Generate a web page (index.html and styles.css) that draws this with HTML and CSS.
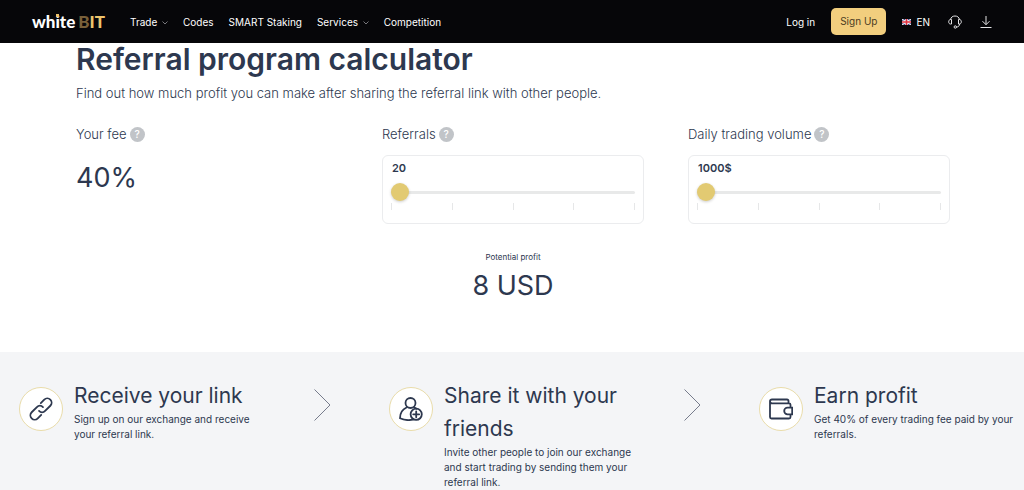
FILE: index.html
```
<!DOCTYPE html>
<html lang="en">
<head>
	<meta charset="UTF-8">
	<meta name="viewport" content="width=device-width, initial-scale=1.0">
	<title>WhiteBIT Referral Program</title>
	<link rel="stylesheet" href="styles.css">
</head>
<body>
	<header class="header">
		<a class="logo" href="#" aria-label="whiteBIT"><span>wh<span class="logo-i">i</span>te</span><span class="logo-b">B</span><span class="logo-it">IT</span></a>
		<nav class="nav">
			<a href="#">Trade <svg class="chevron" viewBox="0 0 6 4"><path d="M.5.5 3 3 5.5.5"/></svg></a>
			<a href="#">Codes</a>
			<a href="#">SMART Staking</a>
			<a href="#">Services <svg class="chevron" viewBox="0 0 6 4"><path d="M.5.5 3 3 5.5.5"/></svg></a>
			<a href="#">Competition</a>
		</nav>
		<div class="actions">
			<a href="#">Log in</a>
			<a class="signup" href="#">Sign Up</a>
			<button class="lang" type="button">
				<svg class="flag" viewBox="0 0 18 12"><path fill="#3b4a85" d="M0 0h18v12H0z"/><path stroke="#fff" stroke-width="2" d="m0 0 18 12M18 0 0 12"/><path stroke="#fff" stroke-width="5" d="M9 0v12M0 6h18"/><path stroke="#e0313f" stroke-width="3" d="M9 0v12M0 6h18"/></svg>
				EN
			</button>
			<button class="icon-btn" type="button" aria-label="Support">
				<svg width="14" height="14" viewBox="0 0 14 14"><path d="M2.5 4.5C3 2.2 4.7 1 7 1s4 1.200 4.500 3.500M3.500 4.500v4.500H2.500C1.300 9 .7 8 .7 6.800s.6-2.300 1.800-2.300zM10.500 4.500v4.500h1c1.200 0 1.800-1 1.800-2.200s-.6-2.300-1.800-2.300zM11.500 9c0 2-1.200 3-3 3"/><circle cx="7.300" cy="12" r="1.200"/></svg>
			</button>
			<button class="icon-btn" type="button" aria-label="Download app">
				<svg width="12" height="14" viewBox="0 0 12 14"><path d="M6 1v8.500M2.500 6.200 6 9.700l3.500-3.500M.5 12.500h11"/></svg>
			</button>
		</div>
	</header>

	<main>
		<section class="calculator">
			<h1>Referral program calculator</h1>
			<p class="lead">Find out how much profit you can make after sharing the referral link with other people.</p>
			<div class="fields">
				<div>
					<div class="field-name">Your fee <button class="help" type="button" aria-label="About your fee">?</button></div>
					<div class="fee">40%</div>
				</div>
				<div>
					<div class="field-name"><label for="referrals">Referrals</label> <button class="help" type="button" aria-label="About referrals">?</button></div>
					<div class="range-box">
						<output for="referrals">20</output>
						<input id="referrals" type="range" min="20" max="1000" value="20">
						<div class="ticks"><i></i><i></i><i></i><i></i><i></i></div>
					</div>
				</div>
				<div>
					<div class="field-name"><label for="volume">Daily trading volume</label> <button class="help" type="button" aria-label="About daily trading volume">?</button></div>
					<div class="range-box">
						<output for="volume">1000$</output>
						<input id="volume" type="range" min="1000" max="100000" value="1000">
						<div class="ticks"><i></i><i></i><i></i><i></i><i></i></div>
					</div>
				</div>
			</div>
			<div class="profit">
				<div class="profit-name">Potential profit</div>
				<div class="profit-value">8 USD</div>
			</div>
		</section>

		<section class="steps">
			<div class="step">
				<div class="step-icon">
					<svg viewBox="0 0 24 24"><g transform="translate(12 12) rotate(-45)"><path d="M4-4.300h4.900a4.300 4.300 0 0 1 0 8.600H1.500A4.300 4.300 0 0 1-2.800 0"/><path d="M-4 4.300h-4.900a4.300 4.300 0 0 1 0-8.600H-1.500A4.300 4.300 0 0 1 2.800 0"/></g></svg>
				</div>
				<div class="step-text">
					<h2>Receive your link</h2>
					<p>Sign up on our exchange and receive your referral link.</p>
				</div>
			</div>
			<svg class="arrow" viewBox="0 0 17 32"><path d="M.5.500 16 16 .5 31.500"/></svg>
			<div class="step">
				<div class="step-icon">
					<svg viewBox="0 0 24 24"><circle cx="11.500" cy="6" r="5"/><path d="M7.500 10.500C3.500 12.300 1 16 1 21.300c3.500 1.700 8.500 2.200 13 1.400M15.500 10.500l2 1.200"/><circle cx="17.200" cy="17.300" r="5.600"/><path d="M17.200 14.300v6M14.200 17.300h6"/></svg>
				</div>
				<div class="step-text">
					<h2>Share it with your friends</h2>
					<p>Invite other people to join our exchange and start trading by sending them your referral link.</p>
				</div>
			</div>
			<svg class="arrow" viewBox="0 0 17 32"><path d="M.5.500 16 16 .5 31.500"/></svg>
			<div class="step">
				<div class="step-icon">
					<svg viewBox="0 0 24 24"><path d="M19.500 6V4q0-1.500-1.500-1.500H3Q1 2.500 1 4.300V20q0 1.500 1.500 1.500h17.500q1.500 0 1.500-1.500v-2.700M1 4.300Q1 6.300 3 6.300h17q1.500 0 1.500 1.500v2.900M23.200 10.700h-4.700a3.300 3.300 0 0 0 0 6.600h4.700z"/></svg>
				</div>
				<div class="step-text">
					<h2>Earn profit</h2>
					<p>Get 40% of every trading fee paid by your referrals.</p>
				</div>
			</div>
		</section>
	</main>
</body>
</html>
```
FILE: styles.css
```
* {
	box-sizing: border-box;
}
body {
	margin: 0;
	background: #fff;
	color: #2d384f;
	font-family: Inter, "Liberation Sans", sans-serif;
}
h1, h2, p {
	margin: 0;
}
a {
	color: inherit;
	text-decoration: none;
}
button {
	padding: 0;
	border: 0;
	background: none;
	color: inherit;
	font: inherit;
	cursor: pointer;
}

/* header */
.header {
	position: sticky;
	top: 0;
	z-index: 1;
	display: flex;
	align-items: center;
	height: 43px;
	padding: 0 32px;
	background: #060609;
	color: #fff;
	font-size: 10px;
}
.logo {
	display: flex;
	width: 98px;
	font: 900 17px/20px Lato, sans-serif;
}
.logo-i {
	position: relative;
}
.logo-i::before {
	content: "";
	position: absolute;
	top: 3px;
	left: 1px;
	width: 3px;
	height: 3px;
	background: #edc46d;
}
.logo-b {
	margin-left: 3px;
	color: #79603a;
}
.logo-it {
	color: #edc46d;
}
.nav {
	display: flex;
	gap: 15px;
}
.chevron {
	width: 6px;
	height: 4px;
	margin: 0 0 1px 2px;
	fill: none;
	stroke: #77777c;
}
.actions {
	display: flex;
	align-items: center;
	gap: 16px;
	margin-left: auto;
}
.signup {
	padding: 0 9px;
	border-radius: 5px;
	background: #f2ce7e;
	color: #4b3c22;
	line-height: 27px;
}
.lang {
	display: flex;
	align-items: center;
	gap: 5px;
}
.flag {
	width: 9px;
	height: 6px;
}
.icon-btn {
	display: flex;
	margin-left: 2px;
}
.icon-btn svg {
	fill: none;
	stroke: #e4e4e6;
}

/* calculator */
.calculator {
	padding: 0 74px 48px 76px;
}
h1 {
	font-size: 30px;
	font-weight: 600;
	line-height: 32px;
}
.lead {
	margin-top: 8px;
	font-size: 13px;
	font-weight: 300;
	line-height: 20px;
}
.fields {
	display: grid;
	grid-template-columns: repeat(3, 1fr);
	gap: 44px;
	margin-top: 21px;
}
.field-name {
	display: flex;
	align-items: center;
	gap: 3px;
	height: 20px;
	font-size: 13px;
	font-weight: 300;
}
.help {
	width: 15px;
	height: 15px;
	border-radius: 50%;
	background: #c1c4c8;
	color: #fff;
	font-size: 10px;
	font-weight: 500;
	line-height: 15px;
}
.fee {
	margin-top: 16px;
	font-size: 27px;
	line-height: 36px;
}
.range-box {
	margin-top: 11px;
	padding: 4px 8px 13px;
	border: 1px solid #ebecee;
	border-radius: 6px;
}
.range-box output {
	display: block;
	padding-left: 1px;
	font-size: 11px;
	font-weight: 600;
	line-height: 16px;
}
input[type="range"] {
	display: block;
	width: 100%;
	height: 18px;
	margin: 7px 0 0;
	background: none;
	appearance: none;
}
input[type="range"]::-webkit-slider-runnable-track {
	height: 3px;
	border-radius: 2px;
	background: #e8e9e9;
}
input[type="range"]::-webkit-slider-thumb {
	width: 18px;
	height: 18px;
	margin-top: -8px;
	border-radius: 50%;
	background: #e2ca72;
	box-shadow: 0 1px 3px rgba(0, 0, 0, .2);
	appearance: none;
}
.ticks {
	display: flex;
	justify-content: space-between;
	margin-top: 2px;
}
.ticks i {
	width: 1px;
	height: 7px;
	background: #e6e7e8;
}
.profit {
	margin-top: 27px;
	text-align: center;
}
.profit-name {
	font-size: 8px;
	line-height: 12px;
}
.profit-value {
	margin-top: 5px;
	font-size: 27px;
	line-height: 36px;
}

/* how it works */
.steps {
	display: grid;
	grid-template-columns: 1fr 112px 1fr 112px 1fr;
	padding: 27px 7px 0 19px;
	background: #f4f5f7;
}
.step {
	display: flex;
	gap: 11px;
}
.step:not(:last-child) {
	padding-right: 12px;
}
.step-icon {
	display: flex;
	flex: none;
	align-items: center;
	justify-content: center;
	width: 44px;
	height: 44px;
	margin-top: 8px;
	border: 1px solid #e9dcaa;
	border-radius: 50%;
	background: #fff;
}
.step-icon svg {
	width: 24px;
	height: 24px;
	fill: none;
	stroke: #2d384f;
	stroke-width: 1.8;
	stroke-linecap: round;
}
h2 {
	font-size: 21px;
	font-weight: 400;
	line-height: 33px;
}
.step p {
	font-size: 10px;
	line-height: 15px;
}
.arrow {
	width: 17px;
	height: 32px;
	margin: 10px 0 0 37px;
	fill: none;
	stroke: #777c8c;
}
```
